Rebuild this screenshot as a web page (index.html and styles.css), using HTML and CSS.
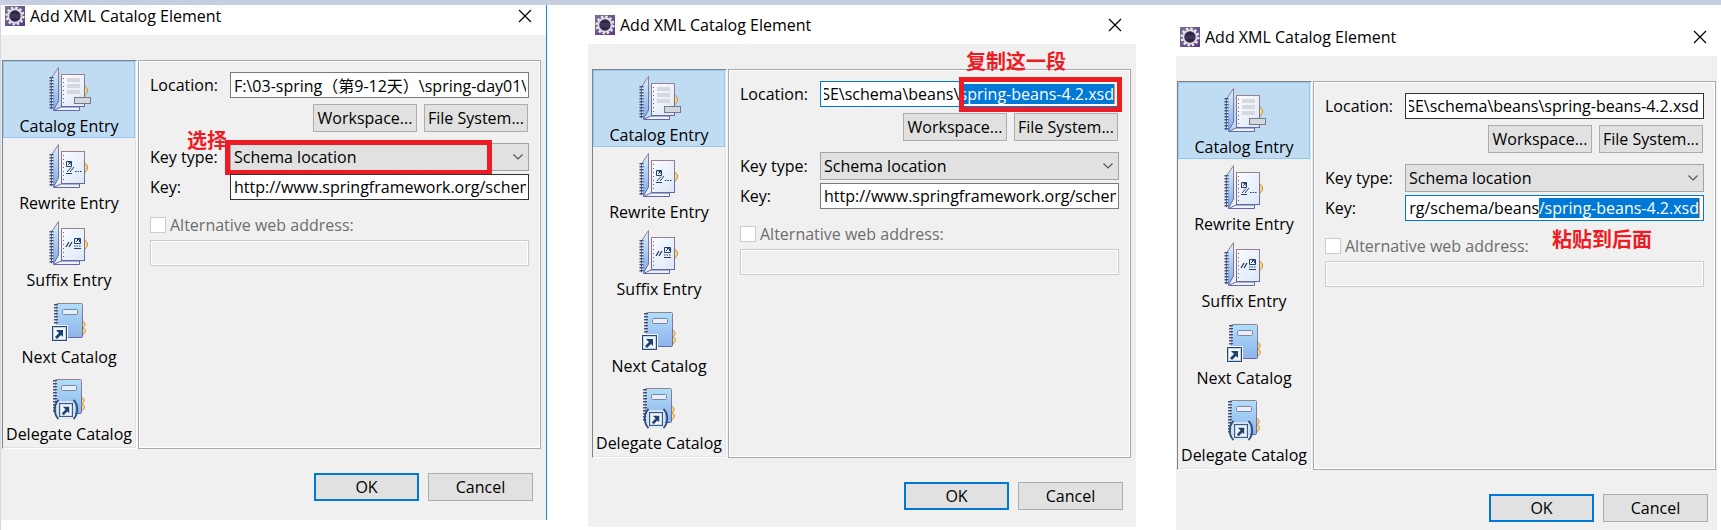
FILE: index.html
```html
<!DOCTYPE html>
<html lang="zh-CN">
<head>
<meta charset="utf-8">
<title>Add XML Catalog Element</title>
<link rel="stylesheet" href="styles.css">
</head>
<body>
<svg class="sprite" aria-hidden="true">
  <defs>
    <linearGradient id="cover" x1="0" y1="0" x2="0" y2="1"><stop offset="0" stop-color="#d9f1ff"/><stop offset="1" stop-color="#82a9e6"/></linearGradient>
    <linearGradient id="book" x1="0" y1="0" x2="0" y2="1"><stop offset="0" stop-color="#aee0fb"/><stop offset="1" stop-color="#90b2ea"/></linearGradient>
    <linearGradient id="sheet" x1="0" y1="0" x2="1" y2="1"><stop offset="0" stop-color="#fbfcff"/><stop offset="1" stop-color="#dde8f7"/></linearGradient>
    <linearGradient id="edge" x1="0" y1="0" x2="0" y2="1"><stop offset="0" stop-color="#9a7f8c"/><stop offset="1" stop-color="#6468a8"/></linearGradient>
    <linearGradient id="purple" x1="0" y1="0" x2="1" y2="1"><stop offset="0" stop-color="#7d7490"/><stop offset="1" stop-color="#5a3a86"/></linearGradient>
    <symbol id="i-app" viewBox="0 0 20 20">
      <rect width="20" height="20" fill="url(#purple)"/>
      <circle cx="10" cy="10" r="8.4" fill="none" stroke="#efedf1" stroke-width="2.200" stroke-dasharray="2.400 2"/>
      <circle cx="10" cy="10" r="6.700" fill="#2e2747" stroke="#dcd9e0" stroke-width="2"/>
      <path d="M5 9h10M5 11h10" stroke="#574f73" stroke-width=".8"/>
    </symbol>
    <symbol id="i-binder" viewBox="0 0 49 48">
      <path d="M8.500 46.500H34.500V43H16L8.500 46.500z" fill="#eef4fc" stroke="#6468a8"/>
      <path d="M6.500 14L13.500 3.500V37L8.500 46L6.500 45z" fill="url(#cover)" stroke="url(#edge)"/>
      <path d="M6.500 13V46" stroke="#3f4f7d" stroke-width="4" stroke-dasharray="1.500 1.500"/>
      <path d="M7.500 13V46" stroke="#e2efff" stroke-dasharray="1.500 1.500" stroke-dashoffset="1.500"/>
      <path d="M39.500 21.500l3 3.500v3l-3 4z" fill="#fbd777" stroke="#c29848"/>
      <rect x="16.500" y="10.500" width="23" height="32" fill="url(#sheet)" stroke="url(#edge)"/>
      <path d="M18.500 14V41" stroke="#596091" stroke-dasharray="1 3"/>
    </symbol>
    <symbol id="i-arrow" viewBox="0 0 15 15">
      <rect x=".5" y=".5" width="14" height="14" fill="#f1f7fd" stroke="#29476c"/>
      <rect x="1.500" y="1.500" width="12" height="12" fill="none" stroke="#c1d4e8"/>
      <path d="M4 4h7v7l-2-2-4 4-2-2 4-4z" fill="#1f416d"/>
    </symbol>
    <symbol id="i-catalog" viewBox="0 0 49 48">
      <use href="#i-binder"/>
      <path d="M22 16h13M22 22h13M22 28h13" stroke="#d6d8de" stroke-width="4"/>
      <rect x="29.500" y="33.500" width="16" height="6" fill="#d4d7dc" stroke="#777b86"/>
    </symbol>
    <symbol id="i-rewrite" viewBox="0 0 49 48">
      <use href="#i-binder"/>
      <g fill="none" stroke="#22406e"><path d="M21.500 20.500h5v5h-5zM23 24l3-3M23.500 21.500H26V24M21 32.500h6"/><path d="M22 31l4-4.500M25 31l4-5M30 30.500h1.500M32.500 30.500H34M35 30.500h1.500"/></g>
    </symbol>
    <symbol id="i-suffix" viewBox="0 0 49 48">
      <use href="#i-binder"/>
      <g fill="none" stroke="#22406e"><path d="M29.500 20.500h6v5h-6zM31 24l3-3M32 21.500h2.500V24M29 30.500h7M29 28h1.500M31.500 28H33M34 28h1.500"/><path d="M21 29l3-5M24 29l3-5" stroke-width="1.300"/></g>
    </symbol>
    <symbol id="i-book" viewBox="0 0 49 48">
      <path d="M37 26c4 1 4 5 1 7 4 1 3 6-1 7z" fill="#fbd777" stroke="#c29848"/>
      <rect x="11.500" y="8.500" width="26" height="34" rx="1" fill="url(#book)" stroke="url(#edge)"/>
      <rect x="17.500" y="14.500" width="15" height="5" rx="1" fill="#e3effa" stroke="#8a7f98"/>
      <path d="M11 9V42" stroke="#3f4f7d" stroke-width="4" stroke-dasharray="1.500 1.500"/>
      <path d="M12 9V42" stroke="#e2efff" stroke-dasharray="1.500 1.500" stroke-dashoffset="1.500"/>
    </symbol>
    <symbol id="i-next" viewBox="0 0 49 48">
      <use href="#i-book"/><rect x="6" y="30" width="17" height="17" fill="#f5f8fc"/>
      <use href="#i-arrow" x="7" y="31" width="15" height="15"/>
    </symbol>
    <symbol id="i-delegate" viewBox="0 0 49 48">
      <g transform="translate(-1 -1)"><use href="#i-book"/></g>
      <rect x="11" y="29" width="19" height="18" rx="4" fill="#dfeafa" opacity=".8"/>
      <use href="#i-arrow" x="14" y="31" width="14" height="14"/>
      <path d="M13.500 28c-5 5-5 14 0 19M28.500 28c5 5 5 14 0 19" fill="none" stroke="#2c4d77" stroke-width="1.800"/>
    </symbol>
    <symbol id="i-close" viewBox="0 0 14 14"><path d="M1 1l12 12M13 1L1 13" fill="none" stroke="#000" stroke-width="1.200"/></symbol>
    <symbol id="i-chevron" viewBox="0 0 10 6"><path d="M.5 .5L5 5 9.500 .5" fill="none" stroke="#555" stroke-width="1.200"/></symbol>
  </defs>
</svg>

<main class="board">
  <section class="dialog dialog-select">
    <header class="title"><svg class="app"><use href="#i-app"/></svg><h2>Add XML Catalog Element</h2><button class="close" aria-label="Close"><svg><use href="#i-close"/></svg></button></header>
    <div class="body">
      <div class="content">
        <nav class="kinds">
          <button class="kind current"><svg><use href="#i-catalog"/></svg>Catalog Entry</button>
          <button class="kind"><svg><use href="#i-rewrite"/></svg>Rewrite Entry</button>
          <button class="kind"><svg><use href="#i-suffix"/></svg>Suffix Entry</button>
          <button class="kind"><svg><use href="#i-next"/></svg>Next Catalog</button>
          <button class="kind"><svg><use href="#i-delegate"/></svg>Delegate Catalog</button>
        </nav>
        <form class="panel">
          <div class="row location"><label for="loc1">Location:</label><div class="field"><input id="loc1" type="text" value="F:\03-spring（第9-12天）\spring-day01\spring"></div></div>
          <div class="browse"><button type="button">Workspace...</button><button type="button">File System...</button></div>
          <div class="row keytype"><label for="type1">Key type:</label><div class="field"><select id="type1"><option>Schema location</option></select><svg class="chevron"><use href="#i-chevron"/></svg><span class="frame frame-type"></span><span class="note note-select">选择</span></div></div>
          <div class="row"><label for="key1">Key:</label><div class="field"><input id="key1" class="dark" type="text" value="http://www.springframework.org/schema/beans"></div></div>
          <label class="alt"><input type="checkbox" disabled>Alternative web address:</label>
          <input class="web" type="text" aria-label="Alternative web address" disabled>
        </form>
      </div>
      <footer class="actions"><button class="ok">OK</button><button>Cancel</button></footer>
    </div>
  </section>

  <section class="dialog dialog-copy">
    <header class="title"><svg class="app"><use href="#i-app"/></svg><h2>Add XML Catalog Element</h2><button class="close" aria-label="Close"><svg><use href="#i-close"/></svg></button></header>
    <div class="body">
      <div class="content">
        <nav class="kinds">
          <button class="kind current"><svg><use href="#i-catalog"/></svg>Catalog Entry</button>
          <button class="kind"><svg><use href="#i-rewrite"/></svg>Rewrite Entry</button>
          <button class="kind"><svg><use href="#i-suffix"/></svg>Suffix Entry</button>
          <button class="kind"><svg><use href="#i-next"/></svg>Next Catalog</button>
          <button class="kind"><svg><use href="#i-delegate"/></svg>Delegate Catalog</button>
        </nav>
        <form class="panel">
          <div class="row location"><label for="loc2">Location:</label><div class="field"><input id="loc2" class="active scrolled" type="text" value="RELEASE\schema\beans\spring-beans-4.2.xsd"><mark class="picked">spring-beans-4.2.xsd</mark><span class="frame frame-location"></span><span class="note note-copy">复制这一段</span></div></div>
          <div class="browse"><button type="button">Workspace...</button><button type="button">File System...</button></div>
          <div class="row keytype"><label for="type2">Key type:</label><div class="field"><select id="type2"><option>Schema location</option></select><svg class="chevron"><use href="#i-chevron"/></svg></div></div>
          <div class="row"><label for="key2">Key:</label><div class="field"><input id="key2" type="text" value="http://www.springframework.org/schema/beans"></div></div>
          <label class="alt"><input type="checkbox" disabled>Alternative web address:</label>
          <input class="web" type="text" aria-label="Alternative web address" disabled>
        </form>
      </div>
      <footer class="actions"><button class="ok">OK</button><button>Cancel</button></footer>
    </div>
  </section>

  <section class="dialog dialog-paste">
    <header class="title"><svg class="app"><use href="#i-app"/></svg><h2>Add XML Catalog Element</h2><button class="close" aria-label="Close"><svg><use href="#i-close"/></svg></button></header>
    <div class="body">
      <div class="content">
        <nav class="kinds">
          <button class="kind current"><svg><use href="#i-catalog"/></svg>Catalog Entry</button>
          <button class="kind"><svg><use href="#i-rewrite"/></svg>Rewrite Entry</button>
          <button class="kind"><svg><use href="#i-suffix"/></svg>Suffix Entry</button>
          <button class="kind"><svg><use href="#i-next"/></svg>Next Catalog</button>
          <button class="kind"><svg><use href="#i-delegate"/></svg>Delegate Catalog</button>
        </nav>
        <form class="panel">
          <div class="row location"><label for="loc3">Location:</label><div class="field"><input id="loc3" class="dark scrolled" type="text" value="RELEASE\schema\beans\spring-beans-4.2.xsd"></div></div>
          <div class="browse"><button type="button">Workspace...</button><button type="button">File System...</button></div>
          <div class="row keytype"><label for="type3">Key type:</label><div class="field"><select id="type3"><option>Schema location</option></select><svg class="chevron"><use href="#i-chevron"/></svg></div></div>
          <div class="row"><label for="key3">Key:</label><div class="field"><input id="key3" class="active scrolled" type="text" value="http://www.springframework.org/schema/beans/spring-beans-4.2.xsd"><mark class="picked">/spring-beans-4.2.xsd</mark><span class="note note-paste">粘贴到后面</span></div></div>
          <label class="alt"><input type="checkbox" disabled>Alternative web address:</label>
          <input class="web" type="text" aria-label="Alternative web address" disabled>
        </form>
      </div>
      <footer class="actions"><button class="ok">OK</button><button>Cancel</button></footer>
    </div>
  </section>
</main>
<script src="script.js"></script>
</body>
</html>
```
FILE: styles.css
```css
* { box-sizing: border-box; }
body {
  margin: 0;
  background: #fff;
  color: #000;
  font: 16px/22px "Open Sans", "Noto Sans CJK SC", sans-serif;
}
button, input, select { font: inherit; color: inherit; margin: 0; border-radius: 0; outline: 0; }
.sprite { position: absolute; width: 0; height: 0; }

.board {
  display: grid;
  grid-template-columns: 546fr 41px 548fr 40px 541fr 4px;
  align-items: start;
  min-height: 100vh;
  border-top: 5px solid #c6cfe0;
  border-left: 1px solid #cfd9eb;
}
.dialog-select { grid-column: 1; border-right: 1px solid #1883d7; }
.dialog-copy { grid-column: 3; margin-top: 9px; }
.dialog-paste { grid-column: 5; margin-top: 21px; }

.title { display: flex; align-items: center; height: 30px; padding: 0 14px 8px 4px; }
.dialog-copy .title { padding-left: 7px; }
.title h2 { flex: 1; margin: 0 0 0 5px; font-size: 16px; font-weight: 400; }
.app { width: 20px; height: 20px; }
.dialog-paste .title { padding-right: 10px; }
.close { padding: 0; border: 0; background: none; line-height: 0; }
.close svg { width: 14px; height: 14px; }

.body { background: #f0f0f0; padding: 25px 5px 19px 1px; }
.dialog-copy .body { padding-left: 4px; padding-bottom: 17px; }
.dialog-paste .body { padding-right: 1px; padding-bottom: 8px; }
.content { display: flex; gap: 1px; }

.kinds {
  display: flex;
  flex-direction: column;
  flex: none;
  width: 135px;
  padding: 0 1px 2px 0;
  border: 1px solid;
  border-color: #828282 #fff #fff #828282;
  box-shadow: inset -1px -1px #e3e3e3;
}
.kind {
  display: flex;
  flex-direction: column;
  align-items: center;
  height: 77px;
  padding: 2px 0 0;
  border: 1px solid transparent;
  background: none;
  white-space: nowrap;
}
.kind svg { width: 49px; height: 48px; flex: none; margin-bottom: 3px; }
.current { background: #c0dcf3; border-color: #90c8f6; }

.panel {
  flex: 1;
  min-width: 0;
  padding: 11px;
  border: 1px solid #a9a9ad;
  box-shadow: inset 0 0 0 1px #fff;
}
.row { display: grid; grid-template-columns: 80px minmax(0, 1fr); align-items: center; }
.row label { white-space: nowrap; }
.field { position: relative; display: flex; }
.field input, .field select, .web {
  width: 100%;
  height: 26px;
  padding: 0 2px;
  border: 1px solid #7a7a7a;
  background: #fff;
}
.field input { padding: 0 2px 0 3px; }
.field input.dark { border-color: #333; }
.field input.active { border-color: #0078d7; }
.field .scrolled { padding-right: 4px; }
.field select { appearance: none; height: 28px; padding: 0 30px 0 3px; border-color: #a0a5ab; background: #e1e1e1; }
.chevron { position: absolute; right: 6px; top: 11px; width: 10px; height: 6px; }
.keytype { margin: 11px 0 3px; }

.picked {
  position: absolute;
  right: 4px;
  top: 3px;
  height: 20px;
  line-height: 20px;
  color: #fff;
  background: #0078d7;
  border-right: 1px solid #f08a3c;
}

.browse { display: flex; justify-content: flex-end; gap: 7px; margin: 6px 1px 0 0; }
.browse button, .actions button {
  height: 28px;
  padding: 0;
  border: 1px solid #adadad;
  background: #e1e1e1;
  white-space: nowrap;
}
.browse button { width: 104px; }
.actions { display: flex; justify-content: flex-end; gap: 9px; margin: 24px 8px 0 0; }
.actions button { width: 105px; }
.actions .ok { border: 2px solid #0078d7; }

.alt { display: flex; align-items: center; gap: 4px; height: 22px; margin: 14px 0 4px; color: #6d6d6d; }
.alt input { appearance: none; width: 16px; height: 16px; border: 1px solid #ccc; background: #fff; }
.web { display: block; border-color: #ccc; background: #f0f0f0; box-shadow: inset 0 0 0 1px #fff; }

.frame { position: absolute; border: 5px solid #ed1c24; pointer-events: none; }
.frame-type { left: -5px; right: 37px; top: -3px; height: 35px; }
.frame-location { right: -3px; top: -4px; width: 163px; height: 35px; }
.note {
  position: absolute;
  color: #ed1c24;
  font: 700 20px/20px "Noto Sans CJK SC", sans-serif;
  white-space: nowrap;
}
.note-select { left: -43px; top: -13px; }
.note-copy { right: 53px; top: -30px; }
.note-paste { right: 52px; top: 34px; }
```
FILE: script.js
```js
// Long paths show their end rather than their start.
document.querySelectorAll('.scrolled').forEach(function (input) {
  input.scrollLeft = input.scrollWidth;
});
```
